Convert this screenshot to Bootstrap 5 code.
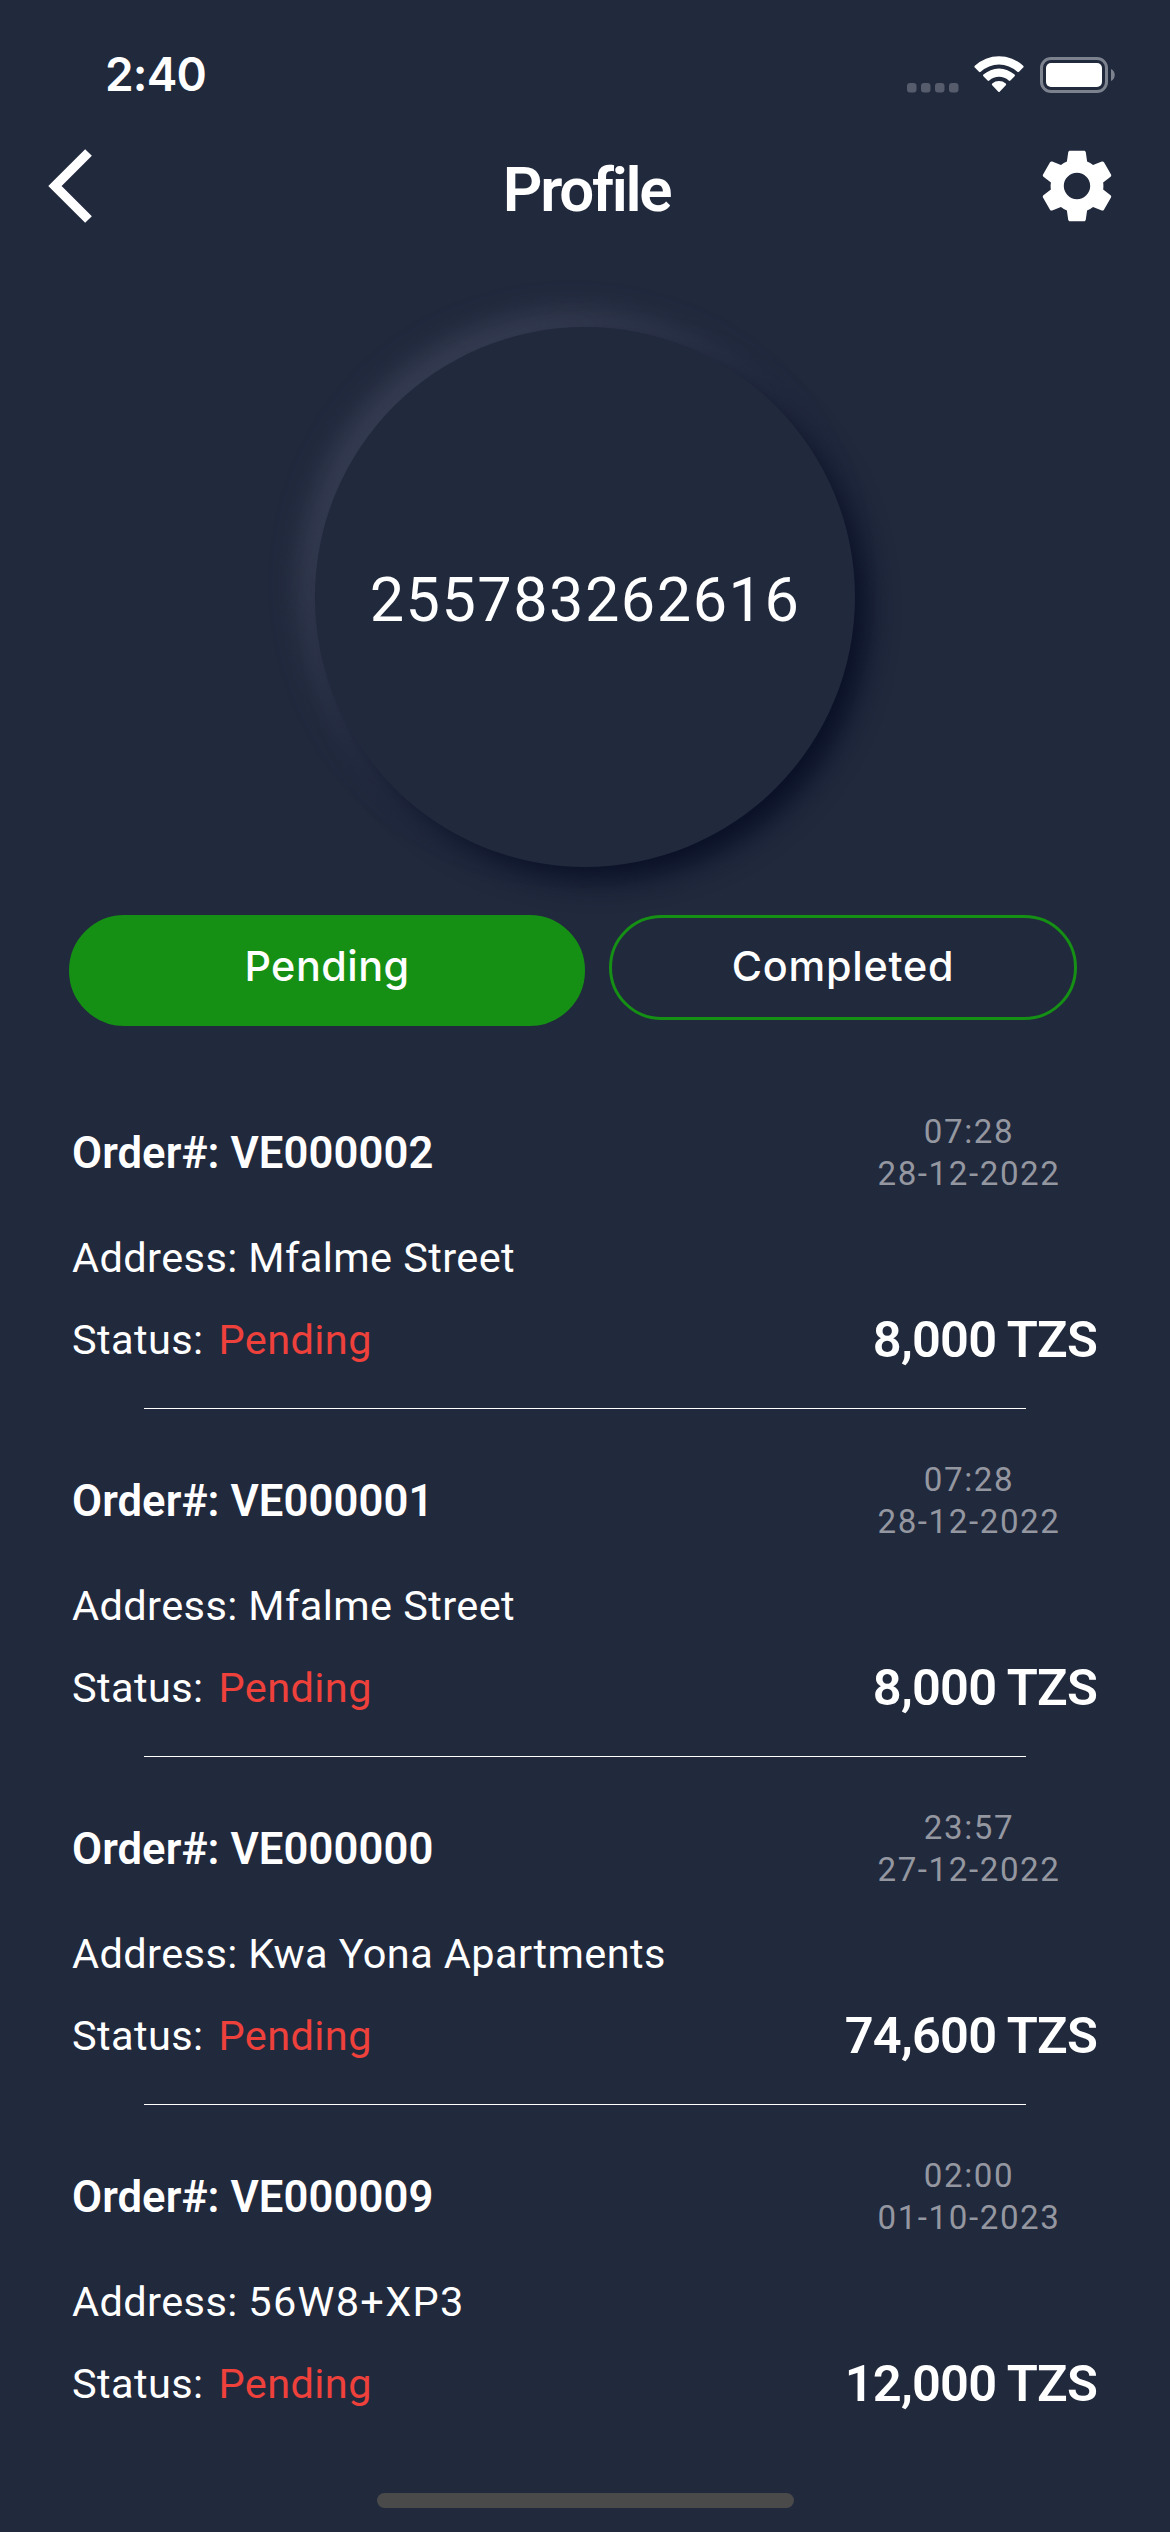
<!DOCTYPE html>
<html lang="en">
<head>
<meta charset="utf-8">
<meta name="viewport" content="width=device-width, initial-scale=1">
<title>Profile</title>
<link href="https://cdn.jsdelivr.net/npm/bootstrap@5.3.0/dist/css/bootstrap.min.css" rel="stylesheet">
<style>
  body { background: #21293d; color: #fff; font-family: Roboto, "Liberation Sans", sans-serif; overflow: hidden; }
  .screen { width: 1170px; height: 2532px; }
  .ui-font { font-family: Inter, "Liberation Sans", sans-serif; }
  .status-bar { height: 147px; padding: 0 55px 0 105px; }
  .clock { font-size: 46px; font-weight: 600; letter-spacing: -.8px; line-height: 60px; padding-top: 1px; }
  .title-bar { height: 78px; padding: 0 49px 0 48px; }
  .title-text { font-size: 61.9px; font-weight: 600; letter-spacing: -2.3px; line-height: 70px; padding: 8px 0 0 14px; }
  .dial { width: 540px; height: 540px; margin: 102px auto 0; background: #21293d; padding-top: 8px;
    box-shadow: 13px 13px 29px #091026, -13px -13px 29px #3a4156; }
  .dial-number { font-size: 61.2px; letter-spacing: 1.5px; }
  .tabs { margin: 48px 93px 0 69px; gap: 24px; }
  .tab-btn, .tab-btn:hover { font-size: 41.3px; font-weight: 500; letter-spacing: .5px; color: #fff; padding: 0; border: 3px solid #159015; border-radius: 56px; line-height: 96px; }
  .tab-on, .tab-on:hover { width: 516px; height: 111px; background: #159015; }
  .tab-off, .tab-off:hover { width: 468px; height: 105px; letter-spacing: .8px; }
  .orders { margin-top: 35px; padding: 0 73px 0 72px; }
  .order { height: 348px; padding-top: 50px; }
  .order-head { height: 84px; margin-bottom: 31px; }
  .order-no { font-size: 43.6px; font-weight: 600; padding-top: 2px; letter-spacing: .08px; }
  .order-when { width: 200px; margin-right: 28px; font-size: 33.1px; line-height: 42px; letter-spacing: 1.6px; color: #9497a0; }
  .order-line { font-size: 41.5px; letter-spacing: .4px; line-height: 64px; }
  .plus-code { letter-spacing: 1.3px; }
  .order-foot { height: 60px; margin-top: 20px; }
  .state { color: #ee413b; margin-left: 15px; }
  .price { font-size: 50.6px; font-weight: 600; letter-spacing: -.8px; line-height: 60px; }
  .order-rule { width: 882px; height: 1px; margin: 38px 0 0 72px; background: #fff; }
  .home-bar { width: 417px; height: 15px; margin: 40px auto 0; background: #4a4a4a; border-radius: 8px; }
</style>
</head>
<body>
<main class="screen d-flex flex-column">
  <div class="status-bar ui-font d-flex align-items-center justify-content-between">
    <div class="clock">2:40</div>
    <svg width="208" height="40" viewBox="907 53 208 40" fill="#fff">
      <g fill="#565c6c"><rect x="907" y="82" width="9.5" height="9.5" rx="3"/><rect x="921" y="82" width="9.5" height="9.5" rx="3"/><rect x="935" y="82" width="9.5" height="9.5" rx="3"/><rect x="949" y="82" width="9.5" height="9.5" rx="3"/></g>
      <path d="M974.8 66.5a1.2 1.2 0 0 1 0-1.7a35.500 35.500 0 0 1 48.400 0a1.200 1.200 0 0 1 0 1.700l-4.200 4.200a1.200 1.200 0 0 1-1.700 0a27 27 0 0 0-36.600 0a1.200 1.200 0 0 1-1.700 0z"/>
      <path d="M983.400 75.300a1.200 1.200 0 0 1 0-1.700a23.200 23.200 0 0 1 31.200 0a1.200 1.200 0 0 1 0 1.700l-4.200 4.200a1.200 1.200 0 0 1-1.700 0a14.500 14.500 0 0 0-19.400 0a1.200 1.200 0 0 1-1.700 0z"/>
      <path d="M992.200 84.200a1.200 1.200 0 0 1 0-1.700a10.800 10.800 0 0 1 13.600 0a1.200 1.200 0 0 1 0 1.700l-5.900 6.300a1.200 1.200 0 0 1-1.800 0z"/>
      <rect x="1041.500" y="57.500" width="65" height="33" rx="9.500" fill="none" stroke="#7d828f" stroke-width="3"/>
      <rect x="1046" y="62" width="56" height="24" rx="5"/>
      <path d="M1111 68c5 2 5 10 0 12z" fill="#7d828f"/>
    </svg>
  </div>

  <header class="title-bar d-flex align-items-center justify-content-between">
    <svg width="78" height="78" viewBox="0 0 78 78"><path d="M40.500 5.500L7 39l33.500 33.500" fill="none" stroke="#fff" stroke-width="9.500"/></svg>
    <h1 class="title-text mb-0">Profile</h1>
    <svg width="88" height="88" viewBox="0 0 24 24" fill="#fff"><path d="M19.140 12.940c.040-.300.060-.610.060-.940 0-.320-.020-.640-.070-.940l2.030-1.580c.180-.140.230-.410.120-.610l-1.920-3.320c-.120-.220-.370-.290-.590-.220l-2.390.960c-.500-.380-1.030-.700-1.620-.940l-.360-2.540c-.040-.240-.240-.410-.480-.410h-3.840c-.240 0-.430.170-.470.410l-.360 2.540c-.590.240-1.130.570-1.620.940l-2.390-.960c-.220-.080-.470 0-.590.220L2.740 8.870c-.120.210-.080.470.120.610l2.030 1.580c-.050.300-.090.630-.090.940s.020.640.070.940l-2.030 1.580c-.180.140-.230.410-.120.610l1.920 3.320c.120.220.370.290.590.220l2.390-.960c.500.380 1.030.700 1.620.940l.360 2.540c.050.240.240.410.480.410h3.840c.240 0 .440-.170.470-.410l.360-2.540c.590-.240 1.130-.560 1.620-.940l2.390.960c.220.080.470 0 .590-.220l1.920-3.320c.120-.220.070-.470-.120-.610l-2.010-1.580zM12 15.600c-1.980 0-3.600-1.620-3.600-3.600s1.620-3.600 3.600-3.600 3.600 1.620 3.600 3.600-1.620 3.600-3.600 3.600z"/></svg>
  </header>

  <section class="dial rounded-circle d-flex align-items-center justify-content-center flex-shrink-0">
    <div class="dial-number">255783262616</div>
  </section>

  <div class="tabs ui-font d-flex align-items-start">
    <button type="button" class="btn tab-btn tab-on d-flex justify-content-center align-items-start">Pending</button>
    <button type="button" class="btn tab-btn tab-off d-flex justify-content-center align-items-start">Completed</button>
  </div>

  <section class="orders">
    <article class="order">
      <div class="order-head d-flex align-items-center justify-content-between">
        <div class="order-no">Order#: VE000002</div>
        <div class="order-when text-center">07:28<br>28-12-2022</div>
      </div>
      <div class="order-line">Address: Mfalme Street</div>
      <div class="order-foot d-flex align-items-center justify-content-between">
        <div class="order-line d-flex"><span>Status:</span><span class="state">Pending</span></div>
        <div class="price">8,000 TZS</div>
      </div>
      <div class="order-rule"></div>
    </article>
    <article class="order">
      <div class="order-head d-flex align-items-center justify-content-between">
        <div class="order-no">Order#: VE000001</div>
        <div class="order-when text-center">07:28<br>28-12-2022</div>
      </div>
      <div class="order-line">Address: Mfalme Street</div>
      <div class="order-foot d-flex align-items-center justify-content-between">
        <div class="order-line d-flex"><span>Status:</span><span class="state">Pending</span></div>
        <div class="price">8,000 TZS</div>
      </div>
      <div class="order-rule"></div>
    </article>
    <article class="order">
      <div class="order-head d-flex align-items-center justify-content-between">
        <div class="order-no">Order#: VE000000</div>
        <div class="order-when text-center">23:57<br>27-12-2022</div>
      </div>
      <div class="order-line">Address: Kwa Yona Apartments</div>
      <div class="order-foot d-flex align-items-center justify-content-between">
        <div class="order-line d-flex"><span>Status:</span><span class="state">Pending</span></div>
        <div class="price">74,600 TZS</div>
      </div>
      <div class="order-rule"></div>
    </article>
    <article class="order">
      <div class="order-head d-flex align-items-center justify-content-between">
        <div class="order-no">Order#: VE000009</div>
        <div class="order-when text-center">02:00<br>01-10-2023</div>
      </div>
      <div class="order-line">Address: <span class="plus-code">56W8+XP3</span></div>
      <div class="order-foot d-flex align-items-center justify-content-between">
        <div class="order-line d-flex"><span>Status:</span><span class="state">Pending</span></div>
        <div class="price">12,000 TZS</div>
      </div>
    </article>
  </section>
  <div class="home-bar flex-shrink-0"></div>
</main>
<script src="https://cdn.jsdelivr.net/npm/bootstrap@5.3.0/dist/js/bootstrap.bundle.min.js"></script>
</body>
</html>
